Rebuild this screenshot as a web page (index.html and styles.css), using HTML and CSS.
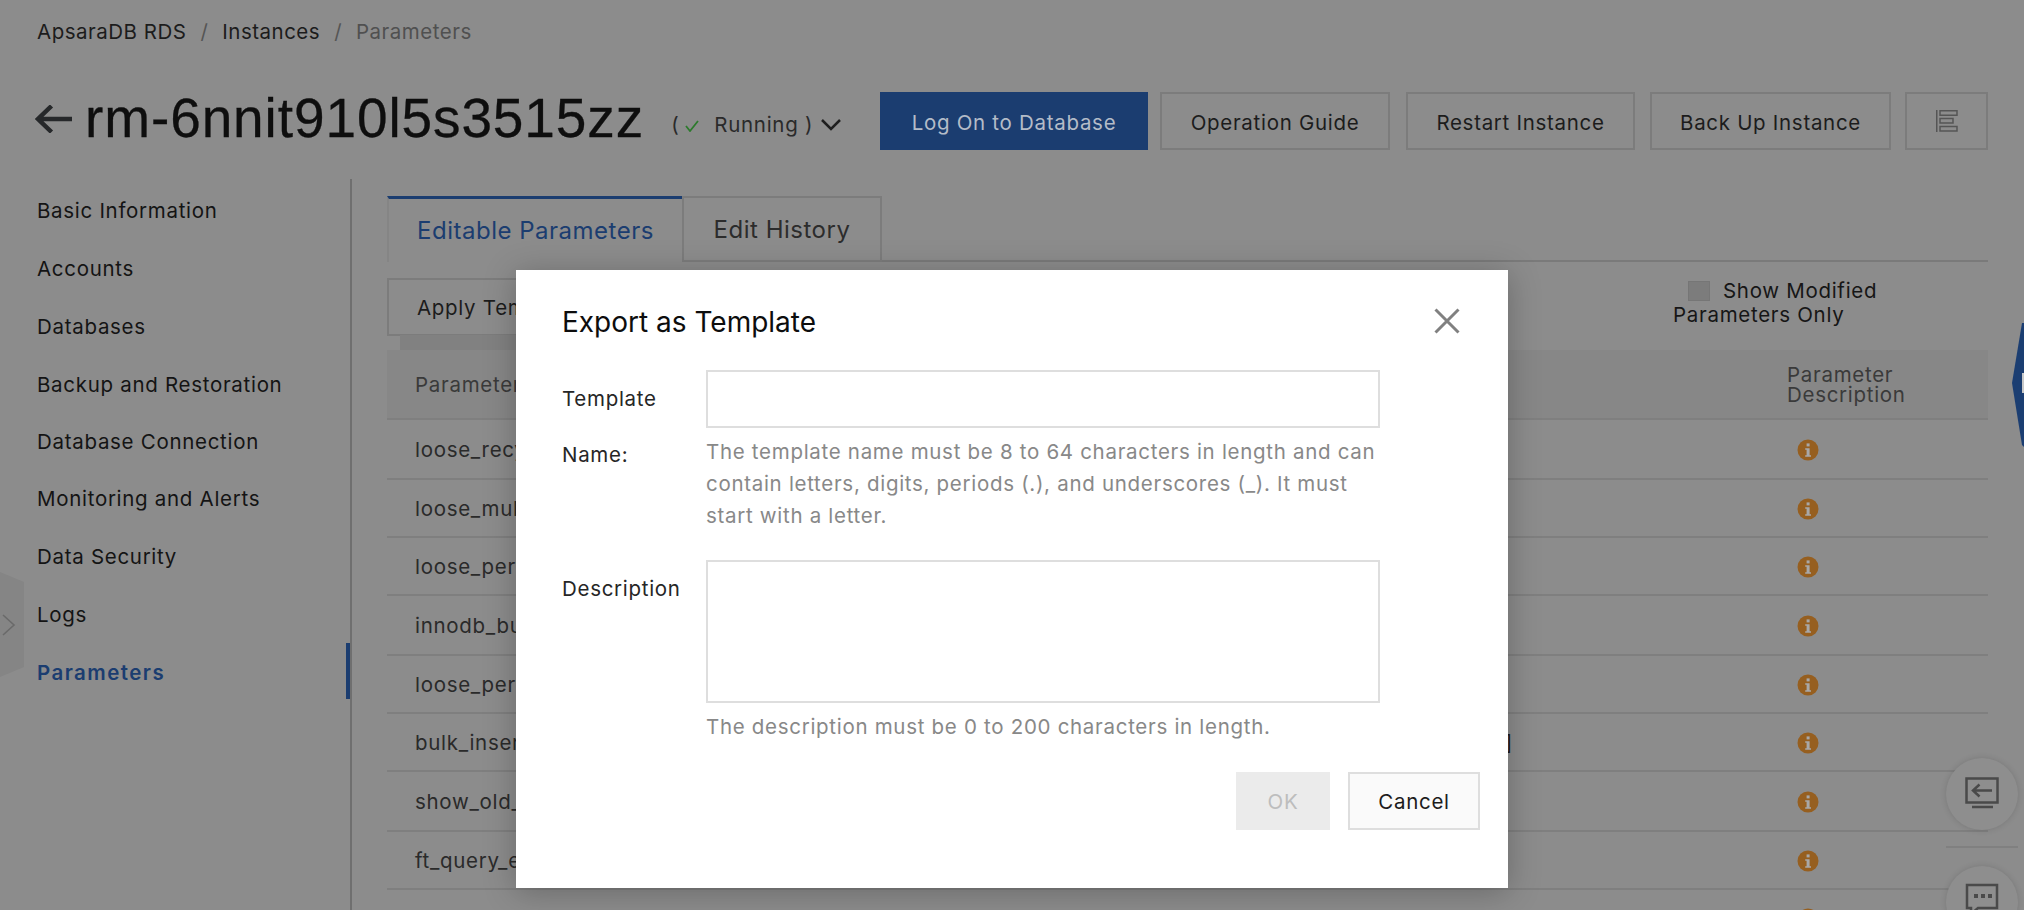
FILE: index.html
```html
<!DOCTYPE html>
<html lang="en">
<head>
<meta charset="utf-8">
<title>Parameters</title>
<link rel="stylesheet" href="styles.css">
</head>
<body>
<div class="page">
  <nav class="crumbs"><span>ApsaraDB RDS</span><i>/</i><span>Instances</span><i>/</i><span class="cur">Parameters</span></nav>
  <header class="head">
    <svg class="back" viewBox="0 0 37 28" width="37" height="28"><path d="M37 14H3M16.500 1 3 14l13.500 13" fill="none" stroke="#26282a" stroke-width="4.500"/></svg>
    <h1>rm-6nnit910l5s3515zz</h1>
    <div class="status">(<svg class="tick" viewBox="0 0 14 12" width="14" height="12"><path d="M1 6l4 5 8-10" fill="none" stroke="#2c7a2c" stroke-width="1.800"/></svg><span>Running )</span><svg class="chev" viewBox="0 0 20 12" width="20" height="12"><path d="M1 1l9 9 9-9" fill="none" stroke="#1e1e1e" stroke-width="2.500"/></svg></div>
    <div class="actions">
      <button class="btn primary">Log On to Database</button>
      <button class="btn g1">Operation Guide</button>
      <button class="btn g2">Restart Instance</button>
      <button class="btn g3">Back Up Instance</button>
      <button class="btn icon"><svg viewBox="0 0 22 22" width="22" height="22" fill="none" stroke="#555" stroke-width="1.500"><path d="M.75 0v22"/><rect x="4" y=".75" width="17" height="4.500"/><rect x="4" y="8.500" width="13" height="4.500"/><rect x="4" y="16.500" width="17" height="4.500"/></svg></button>
    </div>
  </header>
  <div class="body">
    <aside class="side">
      <a>Basic Information</a><a>Accounts</a><a>Databases</a><a>Backup and Restoration</a><a class="short">Database Connection</a><a>Monitoring and Alerts</a><a>Data Security</a><a>Logs</a><a class="on">Parameters</a>
    </aside>
    <main class="main">
      <div class="tabs"><span class="tab active">Editable Parameters</span><span class="tab">Edit History</span></div>
      <div class="tools">
        <div class="apply"><button class="btn applybtn">Apply Template</button></div>
        <label class="only"><b class="check"></b>Show Modified<br>Parameters Only</label>
      </div>
      <div class="table">
        <div class="tr th"><span>Parameter Name</span><em>Parameter<br>Description</em></div>
        <div class="tr tall"><span>loose_recycle_scheduler</span><em><svg class="inf"><use href="#info"/></svg></em></div>
        <div class="tr"><span>loose_multi_blocks_ddl_count</span><em><svg class="inf"><use href="#info"/></svg></em></div>
        <div class="tr"><span>loose_performance_schema</span><em><svg class="inf"><use href="#info"/></svg></em></div>
        <div class="tr tall"><span>innodb_buffer_pool_size</span><em><svg class="inf"><use href="#info"/></svg></em></div>
        <div class="tr"><span>loose_performance_point</span><em><svg class="inf"><use href="#info"/></svg></em></div>
        <div class="tr"><span>bulk_insert_buffer_size</span><b class="val">[0-4294967295]</b><em><svg class="inf"><use href="#info"/></svg></em></div>
        <div class="tr tall"><span>show_old_temporals</span><em><svg class="inf"><use href="#info"/></svg></em></div>
        <div class="tr"><span>ft_query_expansion_limit</span><em><svg class="inf"><use href="#info"/></svg></em></div>
        <div class="tr"><em><svg class="inf"><use href="#info"/></svg></em></div>
      </div>
    </main>
  </div>
</div>

<svg class="defs" width="0" height="0"><symbol id="info" viewBox="0 0 22 22"><circle cx="11" cy="11" r="10.500" fill="#965f20"/><rect x="9.600" y="4.400" width="3" height="3" fill="#a8a8a8"/><path d="M8.200 9.200h4.400v7h1.400v1.600H8.200v-1.600h1.400v-5.400H8.200z" fill="#a8a8a8"/></symbol></svg>

<div class="tab-left"><svg viewBox="0 0 24 105" width="24" height="105"><path d="M0 0 24 10V95L0 105z" fill="#858585"/><path d="M3 43 14 53 3 63" fill="none" stroke="#6a6a6a" stroke-width="1.600"/></svg></div>
<div class="tab-right"><svg viewBox="0 0 12 124" width="12" height="124"><path d="M12 0H10L0 60 10 122 12 124z" fill="#1b3e72"/><rect x="10" y="50" width="2" height="20" fill="#c8c8c8"/></svg></div>
<div class="fab fab1"><svg viewBox="0 0 34 32" width="34" height="32" fill="none" stroke="#4a4a4a" stroke-width="2.500"><rect x="1.500" y="1.500" width="31" height="24"/><path d="M27 13.500H8m6.500-6-6.500 6 6.500 6"/><path d="M7 30h21"/></svg></div>
<div class="fab-line"></div>
<div class="fab fab2"><svg viewBox="0 0 34 34" width="34" height="34" fill="none" stroke="#4a4a4a" stroke-width="2.500"><path d="M2 2h30v23H13l-7 6v-6H2z"/><path d="M9 13h4m3 0h4m3 0h4" stroke-width="4"/></svg></div>

<section class="modal">
  <h2>Export as Template</h2>
  <svg class="close" viewBox="0 0 26 26" width="26" height="26"><path d="M1.500 1.500l23 23M24.500 1.500l-23 23" stroke="#808080" stroke-width="3" fill="none"/></svg>
  <div class="field first">
    <label>Template Name:</label>
    <div class="ctl"><div class="input"></div><p>The template name must be 8 to 64 characters in length and can contain letters, digits, periods (.), and underscores (_). It must start with a letter.</p></div>
  </div>
  <div class="field second">
    <label>Description</label>
    <div class="ctl"><div class="input area"></div><p class="one">The description must be 0 to 200 characters in length.</p></div>
  </div>
  <div class="foot"><button class="btn ok">OK</button><button class="btn cancel">Cancel</button></div>
</section>
</body>
</html>
```
FILE: styles.css
```css
* { box-sizing: border-box; }
html, body { margin: 0; height: 910px; overflow: hidden; }
body { background: #8c8c8c; color: #161616; font-family: Inter, "Liberation Sans", sans-serif; font-size: 20.500px; letter-spacing: .7px; position: relative; width: 2024px; }
button { font-family: inherit; letter-spacing: inherit; }
.defs { position: absolute; }
.page { padding: 0 36px 0 37px; height: 910px; overflow: hidden; }

.crumbs { height: 62px; display: flex; align-items: center; gap: 14px; color: #1c1c1c; letter-spacing: .5px; }
.crumbs i { font-style: normal; color: #555; }
.crumbs .cur { color: #505050; }

.head { height: 117px; display: flex; align-items: flex-start; padding-top: 29px; }
.back { margin: 14px 13px 0 -2px; flex: none; }
h1 { margin: 0; font: 400 55px/54px "Liberation Sans", Arial, sans-serif; letter-spacing: .9px; -webkit-text-stroke: .3px #0e0e0e; color: #0e0e0e; white-space: nowrap; }
.status { margin-left: 27px; display: flex; align-items: center; color: #2a2a2a; height: 56px; padding-top: 10px; white-space: nowrap; }
.tick { margin-left: 6px; margin-top: 3px; }
.status span { margin-left: 15px; }
.chev { margin: 2px 0 0 8px; }
.actions { position: absolute; left: 880px; top: 92px; display: flex; }
.btn { height: 58px; border: 2px solid #7c7c7c; background: transparent; font-size: 20.500px; color: #1c1c1c; padding: 2px 0 0; white-space: nowrap; }
.primary { width: 268px; background: #1b3d70; border-color: #1b3d70; color: #b4bcc8; margin-right: 12px; }
.g1 { width: 230px; margin-right: 16px; }
.g2 { width: 229px; margin-right: 15px; }
.g3 { width: 241px; margin-right: 14px; }
.icon { width: 83px; display: flex; align-items: center; justify-content: center; padding: 0; }

.body { display: flex; height: 731px; }
.side { width: 313px; margin-right: 35px; border-right: 2px solid #6f6f6f; box-sizing: content-box; display: flex; flex-direction: column; padding-top: 2px; position: relative; }
.side a { height: 58px; display: flex; align-items: center; color: #141414; flex: none; }
.side a.short { height: 56px; }
.side a.on { color: #1b3d70; font-weight: 600; letter-spacing: 1.450px; position: relative; }
.side a.on::after { content: ""; position: absolute; right: 0; top: 0; width: 4px; height: 56px; background: #1b3d70; }

.main { width: 1601px; }
.tabs { margin-top: 17px; height: 66px; display: flex; border-bottom: 2px solid #7a7a7a; }
.tab { height: 66px; width: 200px; border: 2px solid #7c7c7c; display: flex; align-items: center; justify-content: center; font-size: 24px; letter-spacing: .5px; color: #2c2c2c; }
.tab.active { width: 295px; border-top: 3px solid #1b3d70; border-bottom: 0; background: #8c8c8c; color: #1b3d70; border-color: #1b3d70 #858585 #8c8c8c #858585; border-right: 0; }
.tools { height: 88px; display: flex; justify-content: space-between; padding-top: 16px; }
.apply { width: 240px; height: 72px; position: relative; }
.apply::after { content: ""; position: absolute; left: 13px; right: 0; top: 57px; height: 15px; background: #818181; }
.applybtn { width: 240px; text-align: left; padding: 1px 0 0 28px; }
.only { width: 315px; line-height: 24px; padding-top: 1px; color: #161616; white-space: nowrap; text-indent: 15px; }
.only .check { display: inline-block; width: 22px; height: 20px; background: #7c7c7c; border: 1px solid #767676; vertical-align: -3px; margin-right: 13px; }

.tr { height: 58px; display: flex; align-items: center; padding-left: 28px; border-bottom: 2px solid #7f7f7f; position: relative; color: #2a2a2a; white-space: nowrap; }
.tr.tall { height: 60px; }
.tr.th { height: 70px; background: #878787; color: #3a3a3a; }
.tr em { position: absolute; left: 1400px; top: 0; bottom: 0; display: flex; align-items: center; font-style: normal; line-height: 20px; }
.th em { top: 15px; align-items: flex-start; }
.val { position: absolute; right: 475px; font-weight: 400; color: #1a1a1a; }
.inf { width: 22px; height: 22px; margin: 1px 0 0 10px; }

.tab-left { position: absolute; left: 0; top: 572px; line-height: 0; }
.tab-right { position: absolute; right: 0; top: 323px; line-height: 0; }
.fab { position: absolute; left: 1946px; width: 72px; height: 72px; border-radius: 50%; background: #8e8e8e; box-shadow: 0 0 6px rgba(0,0,0,.14); display: flex; align-items: center; justify-content: center; }
.fab1 { top: 758px; padding-bottom: 2px; }
.fab2 { top: 866px; align-items: flex-start; padding-top: 17px; }
.fab-line { position: absolute; left: 1946px; top: 846px; width: 72px; height: 2px; background: #808080; }

.modal { position: absolute; left: 516px; top: 270px; width: 992px; height: 618px; background: #fff; box-shadow: 0 4px 30px rgba(0,0,0,.25); padding: 0 0 0 46px; }
h2 { margin: 0; font-weight: 400; font-size: 28px; letter-spacing: 0; line-height: 40px; padding-top: 32px; height: 100px; color: #0d0d0d; }
.close { position: absolute; left: 918px; top: 38px; }
.field { display: flex; }
label { width: 144px; flex: none; color: #262626; line-height: 56px; padding-top: 1px; }
.first label { width: 120px; margin-right: 24px; }
.input { width: 674px; height: 58px; border: 2px solid #dedede; }
.input.area { height: 143px; }
.ctl p { margin: 8px 0 0; width: 674px; color: #888; line-height: 32px; }
.second { margin-top: 28px; }
.foot { position: absolute; right: 28px; top: 502px; display: flex; gap: 18px; }
.foot .btn { padding-top: 0; }
.ok { width: 94px; background: #ebebeb; border: 0; color: #bdbdbd; }
.cancel { width: 132px; background: #fafafa; border: 2px solid #dedede; color: #1c1c1c; }
```
